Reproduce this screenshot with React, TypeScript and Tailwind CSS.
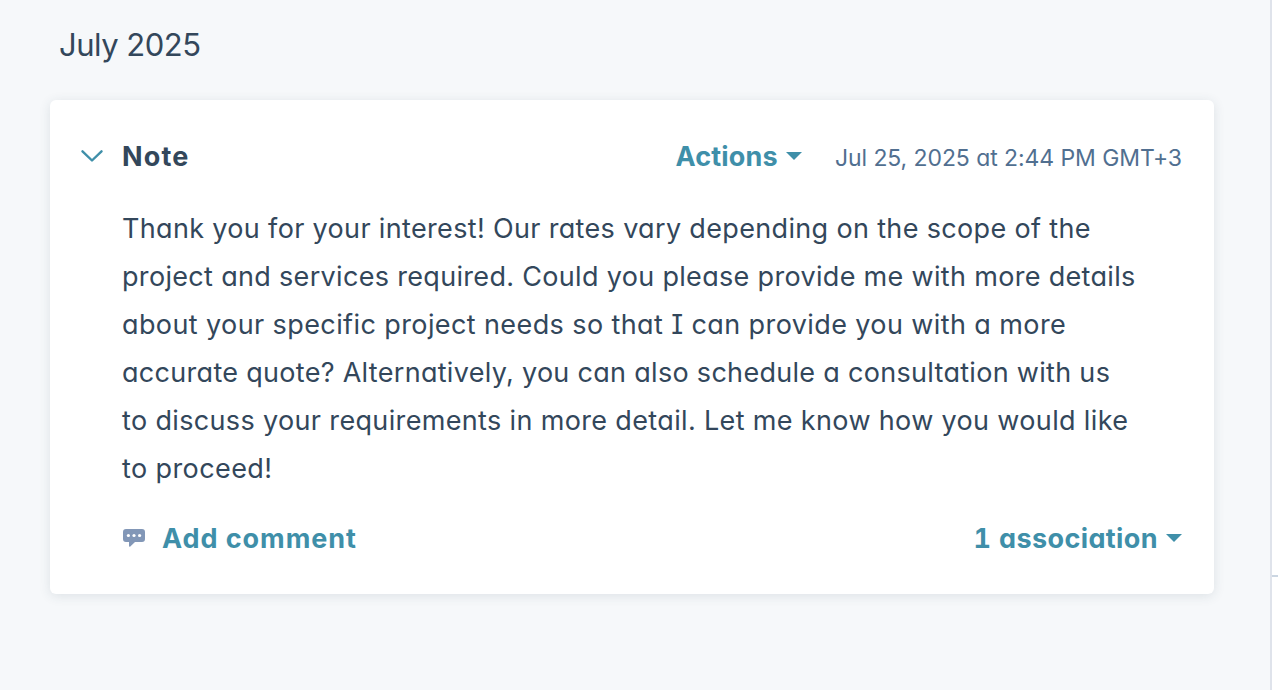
const noteLines = [
  { text: 'Thank you for your interest! Our rates vary depending on the scope of the', className: 'tracking-[0.34px]' },
  { text: 'project and services required. Could you please provide me with more details', className: 'tracking-[0.32px]' },
  { text: 'about your specific project needs so that I can provide you with a more', className: 'tracking-[0.4px]' },
  { text: 'accurate quote? Alternatively, you can also schedule a consultation with us', className: 'tracking-[0.3px]' },
  { text: 'to discuss your requirements in more detail. Let me know how you would like', className: 'tracking-[0.35px]' },
  { text: 'to proceed!', className: 'tracking-[0.4px]' },
];

function Caret() {
  return (
    <svg className="h-2 w-4 shrink-0" viewBox="0 0 16 8" fill="currentColor">
      <path d="M0 0h16L8 8z" />
    </svg>
  );
}

function NoteCard() {
  return (
    <article className="mt-[30px] ml-[50px] h-[494px] w-[1164px] rounded-md bg-white px-8 pt-8 shadow-[0_2px_12px_rgba(45,62,80,0.12)]">
      {/* Header */}
      <div className="flex h-12 items-center whitespace-nowrap">
        <button className="flex w-10 shrink-0 items-center" aria-label="Collapse note">
          <svg className="-ml-px h-3 w-[22px] text-[#3f8fa9]" viewBox="0 0 22 12" fill="none" stroke="currentColor" strokeWidth={2.4}>
            <path strokeLinecap="round" strokeLinejoin="round" d="M1.5 1.3l9.5 9.2 9.5-9.2" />
          </svg>
        </button>
        <h2 className="pt-0.5 text-[27px] leading-[46px] font-bold tracking-[1.2px]">Note</h2>
        <button className="ml-auto flex items-center gap-2 text-[27px] leading-[46px] font-bold text-[#3f8fa9]">
          <span className="pt-0.5 tracking-[0.2px]">Actions</span>
          <Caret />
        </button>
        <time className="ml-[33px] pt-1 text-[23px] leading-11 tracking-[-0.08px] text-[#516f90]">
          Jul 25, 2025 at 2:44 PM GMT+3
        </time>
      </div>

      {/* Body */}
      <p className="mt-[25px] ml-10 text-[27px] leading-12 whitespace-nowrap">
        {noteLines.map((line) => (
          <span key={line.text} className={`block ${line.className}`}>
            {line.text}
          </span>
        ))}
      </p>

      {/* Footer */}
      <div className="mt-[21px] ml-10 flex h-12 items-center text-[27px] leading-[46px] font-bold whitespace-nowrap text-[#3f8fa9]">
        <button className="flex items-center">
          <svg className="ml-px h-[18px] w-[22px]" viewBox="0 0 22 18">
            <path
              fill="#8297b7"
              d="M3 0h16a3 3 0 0 1 3 3v7a3 3 0 0 1-3 3h-7l-4.7 4.6c-.5.5-1.3.2-1.3-.5V13H3a3 3 0 0 1-3-3V3a3 3 0 0 1 3-3z"
            />
            <circle cx="5.4" cy="6.5" r="1.6" fill="white" />
            <circle cx="11" cy="6.5" r="1.6" fill="white" />
            <circle cx="16.6" cy="6.5" r="1.6" fill="white" />
          </svg>
          <span className="ml-[17px] pt-0.5 tracking-[0.95px]">Add comment</span>
        </button>
        <button className="ml-auto flex items-center gap-2">
          <span className="pt-0.5 tracking-[0.4px] [font-feature-settings:'cv11','tnum']">1 association</span>
          <Caret />
        </button>
      </div>
    </article>
  );
}

export default function App() {
  return (
    <div className="flex h-[690px] w-[1278px] overflow-hidden bg-[#f6f8fa] font-['Inter','Liberation_Sans',sans-serif] text-[#33475b] [font-feature-settings:'cv11','cv08']">
      <main className="w-[1270px] shrink-0 pt-5">
        <h1 className="ml-[59px] text-[31px] leading-[50px] tracking-[-0.5px] whitespace-nowrap">July 2025</h1>
        <NoteCard />
      </main>
      <aside className="flex-1 border-l-2 border-[#dfe3eb] bg-white">
        <div className="h-[577px] border-b-2 border-[#cbd6e2]" />
      </aside>
    </div>
  );
}
